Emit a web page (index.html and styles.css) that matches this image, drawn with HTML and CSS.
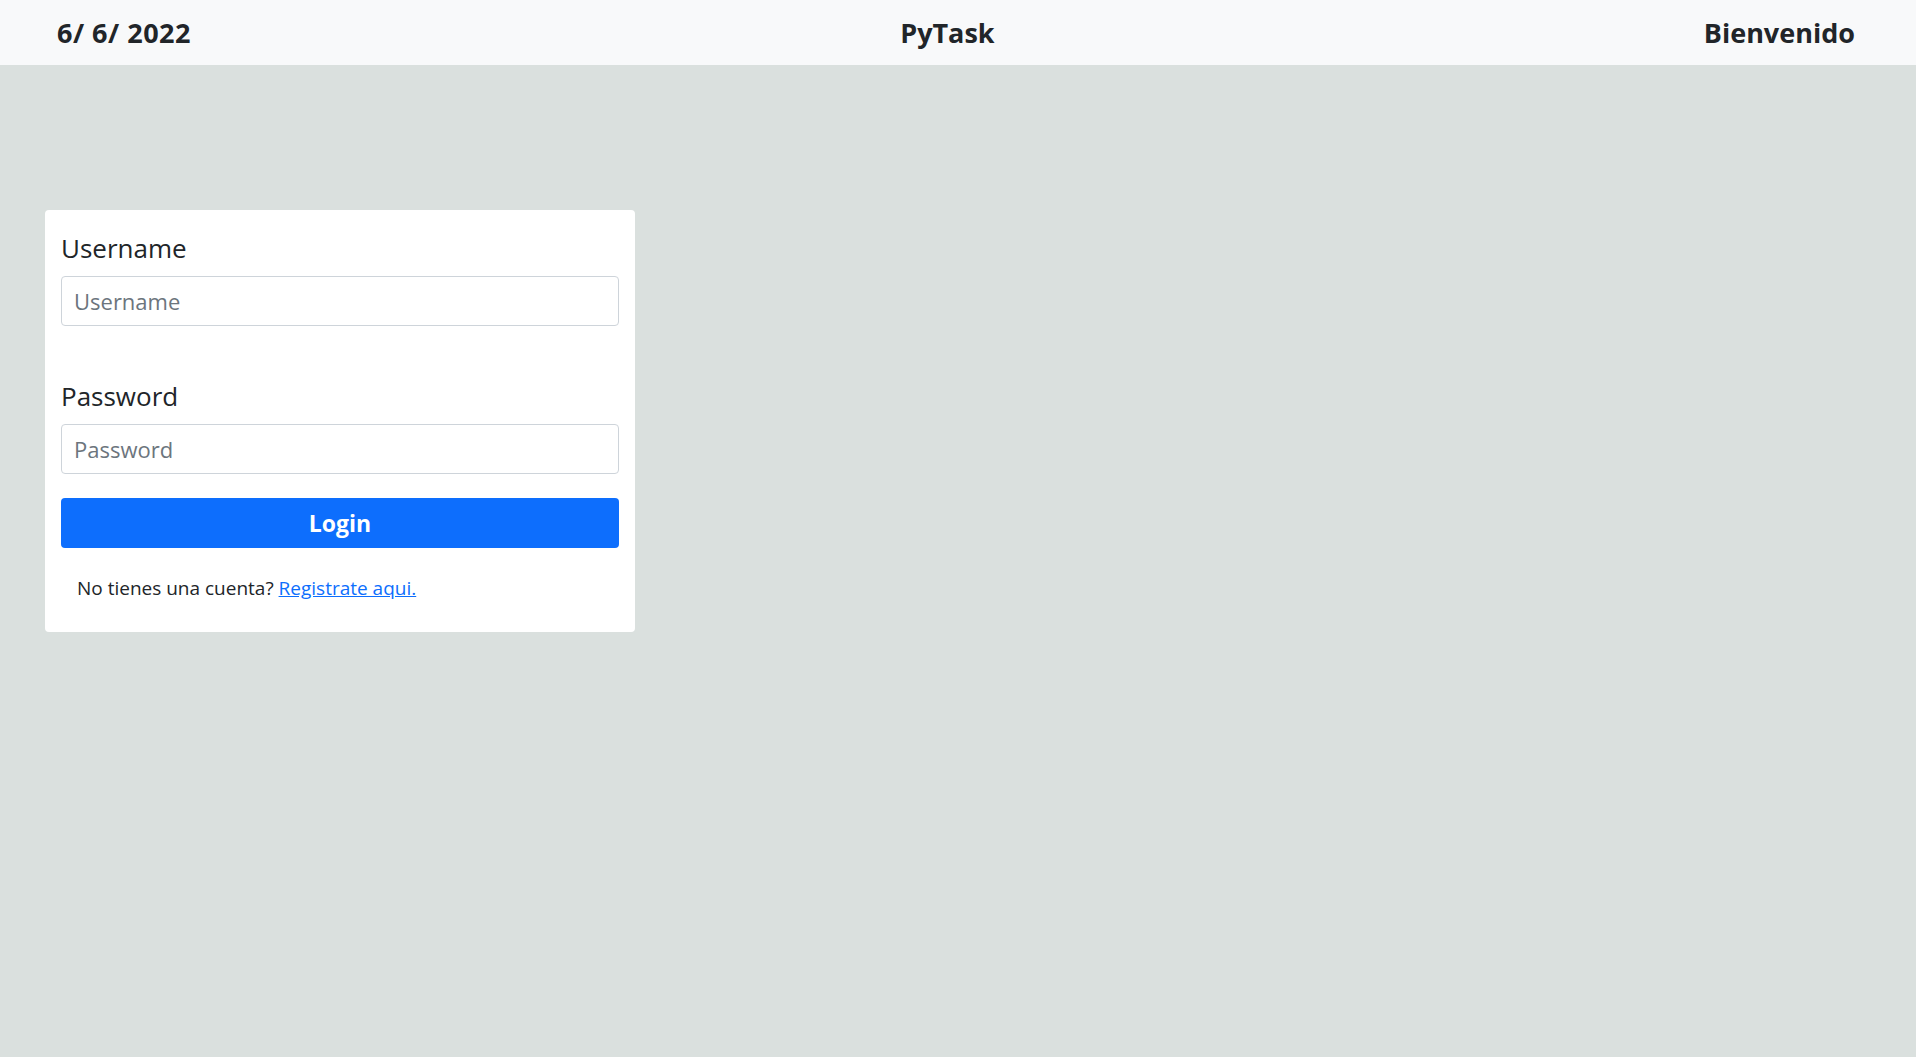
FILE: index.html
```html
<!DOCTYPE html>
<html lang="es">
<head>
<meta charset="utf-8">
<title>PyTask</title>
<link rel="stylesheet" href="styles.css">
</head>
<body>
<nav class="topbar">
  <span class="topbar-item">6/ 6/ 2022</span>
  <span class="topbar-item">PyTask</span>
  <span class="topbar-item">Bienvenido</span>
</nav>
<main class="page">
  <form class="login-card">
    <div class="field">
      <label class="field-label" for="username">Username</label>
      <input class="field-input" id="username" type="text" placeholder="Username">
    </div>
    <div class="field field-second">
      <label class="field-label" for="password">Password</label>
      <input class="field-input" id="password" type="password" placeholder="Password">
    </div>
    <button class="login-btn" type="button">Login</button>
    <p class="signup">No tienes una cuenta? <a class="signup-link" href="#">Registrate aqui.</a></p>
  </form>
</main>
</body>
</html>
```
FILE: styles.css
```css
html, body {
  margin: 0;
  padding: 0;
}
body {
  background: #dae0de;
  font-family: "Segoe UI", "Open Sans", "Noto Sans", sans-serif;
  color: #212529;
  min-height: 100vh;
}
.topbar {
  height: 65px;
  box-sizing: border-box;
  background: #f8f9fa;
  display: flex;
  align-items: center;
  justify-content: space-between;
  padding: 0 61px 0 57px;
}
.topbar-item {
  font-size: 27px;
  font-weight: 700;
  color: #212529;
}
.topbar-item:first-child {
  letter-spacing: 0.5px;
}
.page {
  padding: 145px 0 0 45px;
}
.login-card {
  width: 590px;
  box-sizing: border-box;
  background: #fff;
  border-radius: 4px;
  padding: 18px 16px 30px;
}
.field {
  display: flex;
  flex-direction: column;
}
.field-second {
  margin-top: 50px;
}
.field-label {
  font-size: 26px;
  line-height: 40px;
  margin-bottom: 8px;
}
.field-input {
  height: 50px;
  box-sizing: border-box;
  border: 1px solid #ced4da;
  border-radius: 4px;
  padding: 0 12px;
  font-family: inherit;
  font-size: 22px;
  color: #212529;
  background: #fff;
}
.field-input::placeholder {
  color: #6c757d;
}
.login-btn {
  margin-top: 24px;
  width: 100%;
  height: 50px;
  border: none;
  border-radius: 4px;
  background: #0d6efd;
  color: #fff;
  font-family: inherit;
  font-size: 23px;
  font-weight: 700;
}
.signup {
  margin: 26px 0 0;
  padding-left: 16px;
  font-size: 19px;
  line-height: 28px;
}
.signup-link {
  color: #0d6efd;
  text-decoration: underline;
}
```
